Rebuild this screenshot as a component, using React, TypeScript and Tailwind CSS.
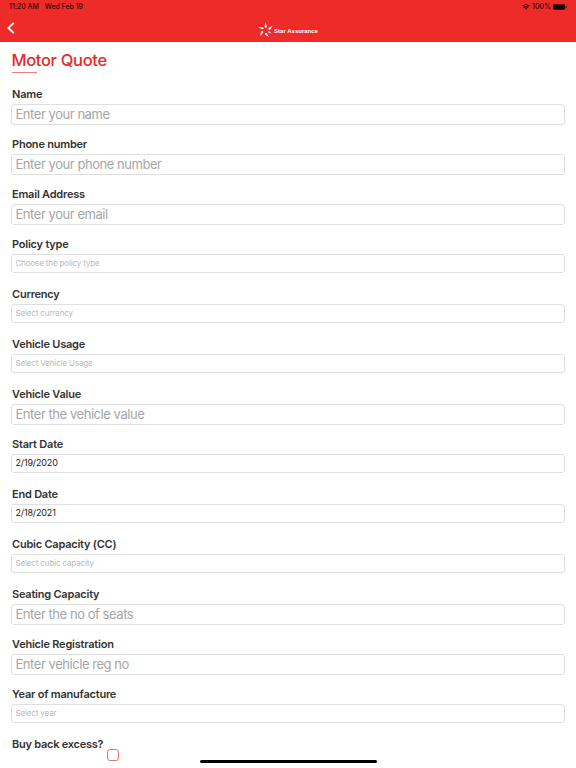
import clsx from "clsx";

type Field = {
  label: string;
  text: string;
  kind: "input" | "select" | "date";
};

const fields: Field[] = [
  { label: "Name", text: "Enter your name", kind: "input" },
  { label: "Phone number", text: "Enter your phone number", kind: "input" },
  { label: "Email Address", text: "Enter your email", kind: "input" },
  { label: "Policy type", text: "Choose the policy type", kind: "select" },
  { label: "Currency", text: "Select currency", kind: "select" },
  { label: "Vehicle Usage", text: "Select Vehicle Usage", kind: "select" },
  { label: "Vehicle Value", text: "Enter the vehicle value", kind: "input" },
  { label: "Start Date", text: "2/19/2020", kind: "date" },
  { label: "End Date", text: "2/18/2021", kind: "date" },
  { label: "Cubic Capacity (CC)", text: "Select cubic capacity", kind: "select" },
  { label: "Seating Capacity", text: "Enter the no of seats", kind: "input" },
  { label: "Vehicle Registration", text: "Enter vehicle reg no", kind: "input" },
  { label: "Year of manufacture", text: "Select year", kind: "select" },
];

function StatusBar() {
  return (
    <div className="flex h-[14px] items-center justify-between pl-[9px] pr-[9px] text-[7px] font-medium text-[#3a0505]">
      <div className="flex gap-[6px] tracking-[-0.03px]">
        <span>11:20 AM</span>
        <span>Wed Feb 19</span>
      </div>
      <div className="flex items-center gap-[2px]">
        <svg width="8" height="6" viewBox="0 0 16 12" fill="none" stroke="currentColor" strokeWidth="2.6">
          <path d="M1 4.5a10 10 0 0 1 14 0" />
          <path d="M3.8 7.3a6 6 0 0 1 8.4 0" />
          <path d="M8 11.6 5.6 9.2a3.4 3.4 0 0 1 4.8 0Z" fill="currentColor" stroke="none" />
        </svg>
        <span>100%</span>
        <svg width="14" height="6" viewBox="0 0 14 6">
          <rect x="0" y="0.3" width="12.2" height="5.4" rx="1.4" fill="#1c0202" />
          <rect x="12.8" y="2" width="0.7" height="2" rx="0.3" fill="#1c0202" />
        </svg>
      </div>
    </div>
  );
}

function Logo() {
  return (
    <div className="flex items-center gap-[1px] text-white">
      <svg width="15" height="16" viewBox="0 0 15 16" fill="currentColor">
        <path d="M7.2 0.6 9 4.6 8 6 6.6 5Z" />
        <path d="M0.2 5.2 5 5.2 5.8 6.6 4.4 7.3Z" />
        <path d="M2.4 14.2 3 9.6 4.6 8.9 5.3 10.2Z" />
        <path d="M10.8 15 6.9 12.4 7.1 10.9 8.7 11Z" />
        <path d="M14.6 3.8 12.1 7.8 10.4 7.6 10.6 6Z" />
        <path d="M13.6 11.4 10.4 10.8 9.9 9.6 11 9.1Z" />
      </svg>
      <span className="mt-[3px] font-['Liberation_Sans',sans-serif] text-[6px] font-bold leading-none">
        Star Assurance
      </span>
    </div>
  );
}

function FormField({ label, text, kind }: Field) {
  return (
    <div className="h-[50px]">
      <div className="h-5 pl-px text-[11px] font-semibold leading-5 tracking-[-0.22px] text-[#333333]">{label}</div>
      <div
        className={clsx(
          "flex items-center rounded-[3px] border border-[#dfdfdf] pl-[3.5px]",
          kind === "input" && "h-[21px] pt-px text-[13px] tracking-[-0.45px] text-[#a6a6a6]",
          kind === "select" && "h-[19px] pb-px text-[8px] tracking-[-0.14px] text-[#b9b9b9]",
          kind === "date" && "h-[19px] pb-px text-[9px] tracking-[-0.15px] text-[#222222]"
        )}
      >
        {text}
      </div>
    </div>
  );
}

export default function App() {
  return (
    <div className="flex h-[768px] w-full flex-col overflow-hidden bg-white font-['Inter',sans-serif]">
      <header className="h-[42px] bg-[#ed2c29]">
        <StatusBar />
        <div className="grid h-7 grid-cols-3 items-center">
          <svg className="ml-[7px]" width="8" height="12" viewBox="0 0 8 12" fill="none" stroke="white" strokeWidth="1.8">
            <path d="M6.8 0.8 1.4 6l5.4 5.2" />
          </svg>
          <div className="mt-[3px] flex justify-center">
            <Logo />
          </div>
        </div>
      </header>

      <main className="px-[11px] pt-[8px]">
        <h1 className="h-[22px] pl-[0.5px] text-[16.5px] font-medium leading-[21px] tracking-[-0.33px] text-[#e32b2b]">
          Motor Quote
        </h1>
        <div className="ml-px h-px w-[25px] bg-[#e88080]" />
        <div className="pt-[11px]">
          {fields.map((field) => (
            <FormField key={field.label} {...field} />
          ))}
        </div>
        <div className="flex h-[31px]">
          <span className="w-24 whitespace-nowrap pl-px text-[11px] font-semibold leading-5 tracking-[-0.25px] text-[#333333]">
            Buy back excess?
          </span>
          <span className="mt-[15px] h-3 w-3 rounded-[3px] border border-[#df7775]" />
        </div>
      </main>
      <div className="mx-auto mt-[-5px] h-[3px] w-[177px] rounded-full bg-black" />
    </div>
  );
}
